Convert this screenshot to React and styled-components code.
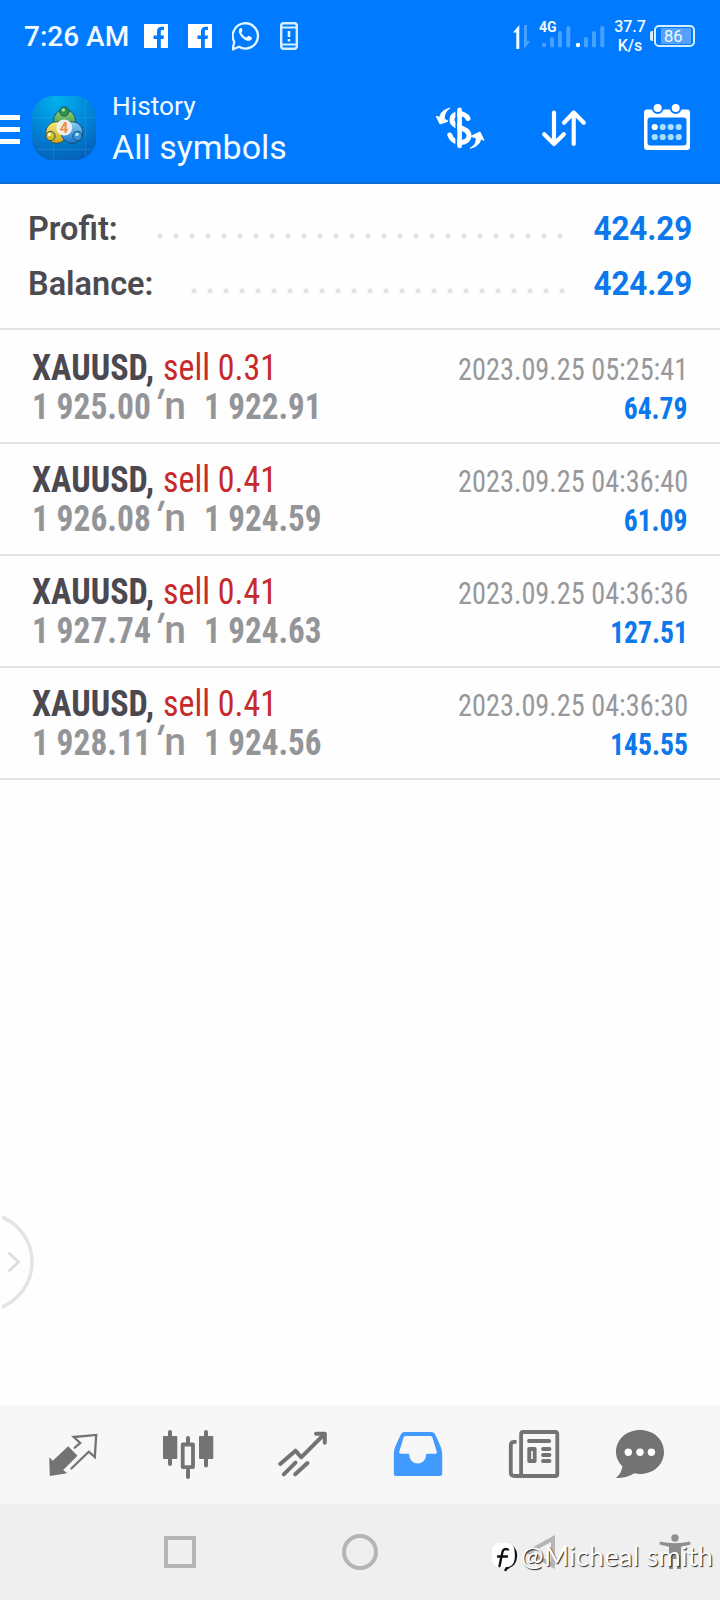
import React from "react";
import styled, { createGlobalStyle } from "styled-components";

const GlobalStyle = createGlobalStyle`
  * { box-sizing: border-box; }
  body { margin: 0; background: #fff; font-family: Roboto, "Liberation Sans", sans-serif; }
  svg { display: block; flex: none; }
`;

const Screen = styled.div`
  position: relative;
  width: 720px;
  height: 1600px;
  display: flex;
  flex-direction: column;
  overflow: hidden;
  background: #fefefe;
`;

/* ---------- top ---------- */
const Header = styled.header`
  height: 184px;
  background: #007aff;
  border-bottom: 2px solid #0a6cd6;
  color: #f2fbff;
`;
const StatusBar = styled.div`
  height: 74px;
  display: flex;
  align-items: center;
  padding: 0 25px 2px 24px;
`;
const Clock = styled.span`
  width: 120px;
  font-size: 28px;
  font-weight: 500;
  line-height: 32px;
  padding-top: 2px;
  white-space: nowrap;
`;
const Notices = styled.div`
  display: flex;
  align-items: center;
  gap: 20px;
  flex: 1;
`;
const Signals = styled.div`
  position: relative;
  height: 36px;
  width: 100px;
`;
const NetworkBadge = styled.span`
  position: absolute;
  left: 30px;
  top: 1px;
  font-size: 14px;
  font-weight: 700;
  line-height: 16px;
`;
const Speed = styled.div`
  width: 40px;
  margin-left: 1px;
  font-size: 16px;
  font-weight: 500;
  line-height: 19px;
  text-align: center;
`;
const Battery = styled.div`
  position: relative;
  width: 41px;
  height: 22px;
  margin-left: 4px;
  padding: 1px;
  border: 2px solid #d4efff;
  border-radius: 5px;
  display: flex;
  justify-content: flex-end;
  &::before {
    content: "";
    position: absolute;
    left: -6px;
    top: 4px;
    width: 3px;
    height: 10px;
    border-radius: 2px 0 0 2px;
    background: #d4efff;
  }
`;
const Charge = styled.span`
  width: 30px;
  height: 16px;
  margin-right: 1px;
  padding-left: 3px;
  background: #56a1fb;
  font-size: 16.5px;
  line-height: 17px;
`;
const AppBar = styled.div`
  height: 108px;
  display: flex;
  align-items: center;
  padding-right: 25px;
`;
const Burger = styled.div`
  width: 20px;
  height: 29px;
  margin: 3px 12px 0 0;
  border-top: 5px solid #fff;
  border-bottom: 5px solid #fff;
  display: flex;
  align-items: center;
  &::before {
    content: "";
    width: 20px;
    height: 5px;
    background: #fff;
  }
`;
const Titles = styled.div`
  flex: 1;
  margin-left: 16px;
  padding-top: 3px;
`;
const Title = styled.div`
  font-size: 26.3px;
  line-height: 34px;
`;
const Subtitle = styled.div`
  font-size: 34px;
  line-height: 48px;
`;
const Actions = styled.div`
  display: flex;
  gap: 47.5px;
`;

/* ---------- summary ---------- */
const Summary = styled.section`
  height: 146px;
  padding: 17px 28px 0;
  border-bottom: 2px solid #e3e3e4;
`;
const SummaryLine = styled.div`
  height: 55px;
  display: flex;
  align-items: center;
  font-size: 32.5px;
  line-height: 53px;
`;
const SummaryLabel = styled.span`
  width: ${(p) => p.$width}px;
  padding-top: 2px;
  color: #4c4b52;
  font-weight: 600;
`;
const Leader = styled.span`
  width: ${(p) => p.$dots * 16}px;
  height: 16px;
  margin-top: 14px;
  background: radial-gradient(circle, #e1e1e3 2px, rgba(225, 225, 227, 0) 3px) 0 0 / 16px 16px;
`;
const SummaryValue = styled.span`
  margin-left: auto;
  padding-top: 2px;
  color: #0b78ec;
  font-weight: 700;
  letter-spacing: -0.1px;
  transform: scaleX(0.965);
  transform-origin: right;
`;

/* ---------- deals ---------- */
const Deals = styled.section`
  flex: 1;
  padding-top: 2px;
`;
const Deal = styled.div`
  height: 112px;
  padding: 16px 32px 0;
  border-bottom: 2px solid #e3e3e4;
  font-stretch: 75%;
`;
const DealLine = styled.div`
  display: flex;
  height: 39px;
  line-height: 39px;
  white-space: pre;
`;
/* Text drawn narrower than the condensed face provides. */
const Narrow = styled.span`
  flex: none;
  transform: scaleX(${(p) => p.$scale});
  transform-origin: ${(p) => p.$from || "left"};
`;
const Symbol = styled(Narrow)`
  width: 131px;
  font-size: 37.5px;
  font-weight: 700;
  color: #4a4950;
`;
const Side = styled(Narrow)`
  font-size: 37.5px;
  color: #c62a2b;
`;
const Price = styled(Narrow)`
  width: ${(p) => p.$width}px;
  font-size: 37.5px;
  font-weight: 700;
  color: #949599;
`;
const Arrow = styled.span`
  width: 46px;
  font-size: 39px;
  font-stretch: 90%;
  font-weight: 500;
  color: #949599;
`;
const Tick = styled.span`
  display: inline-block;
  font-weight: 700;
  transform: translate(-4px, -1px) skewX(-18deg);
`;
const Time = styled(Narrow)`
  margin-left: auto;
  font-size: 30.5px;
  line-height: 43px;
  color: #98989c;
`;
const Amount = styled(Narrow)`
  margin-left: auto;
  font-size: 30.5px;
  line-height: 43px;
  font-weight: 700;
  color: #0b78ec;
`;

/* ---------- bottom ---------- */
const TabBar = styled.nav`
  height: 98px;
  display: grid;
  grid-template-columns: repeat(3, 115px) 116px 115px 97px;
  align-items: center;
  justify-items: center;
  padding-left: 15px;
  background: #f7f7f7;
  color: #737373;
`;
const NavBar = styled.nav`
  height: 96px;
  display: grid;
  grid-template-columns: repeat(3, 180px) 90px;
  align-items: center;
  justify-items: center;
  padding-left: 90px;
  background: #efefef;
  color: #b5b5b5;
`;
const SideHandle = styled.div`
  position: absolute;
  left: 2px;
  top: 1210px;
`;
const Watermark = styled.div`
  position: absolute;
  left: 490px;
  top: 1537px;
  display: flex;
  align-items: center;
  height: 36px;
  gap: 3px;
  color: #fff;
  font: 400 27px Lato, sans-serif;
  letter-spacing: 0.3px;
  text-shadow: 1px 1px 1px #222;
  white-space: nowrap;
`;

const Icon = ({ children, size = 56, ...rest }) => (
  <svg width={size} height={size} viewBox={`0 0 ${size} ${size}`} fill="none" stroke="currentColor" strokeLinecap="round" strokeLinejoin="round" {...rest}>
    {children}
  </svg>
);

const Facebook = () => (
  <svg width="24" height="24" viewBox="0 0 24 24">
    <rect width="24" height="24" fill="#fff" />
    <path d="M13 24v-9H9.500v-3.500H13V8c0-3.600 1.800-5.200 5-5.200h2v3.200h-1.500c-1.300 0-1.700.6-1.700 1.800v3.700H20l-.5 3.500h-2.700v9z" fill="#007aff" />
  </svg>
);

const WhatsApp = () => (
  <svg width="28" height="30" viewBox="1 0.5 28 30">
    <path d="M1.500 29 3.300 21.500A12.600 12.600 0 1 1 8 26.300Z" fill="none" stroke="#e2f6ff" strokeWidth="2.300" strokeLinejoin="round" />
    <path d="M9.500 7.500c-1.500.8-2 2.500-1.500 4.200 1.200 4.300 4.800 7.700 9 8.600 1.800.3 3.500-.7 3.900-2.300l-.2-1.200-3.300-1.600-1.900 1.900c-2.500-1-4.300-2.800-5.200-5.100l1.300-1.700-1.200-3z" fill="#f0fbff" />
  </svg>
);

const PhoneAlert = () => (
  <svg width="18" height="28" viewBox="0 0 18 28">
    <rect x="1.200" y="1.200" width="15.600" height="25.600" rx="2.500" fill="none" stroke="#d4f0ff" strokeWidth="2.400" />
    <path d="M1 5.500h16M1 22.500h16" stroke="#d4f0ff" strokeWidth="1.900" />
    <path d="M9 9v6M9 17v2.500" stroke="#e2f6ff" strokeWidth="2.600" />
  </svg>
);

const SignalBars = ({ x, on }) => (
  <g fill="#47a2ff">
    <circle cx={x} cy="27" r="2.200" fill={on ? "#fff" : "#47a2ff"} />
    <rect x={x + 6} y="19" width="4" height="10.500" rx="2" />
    <rect x={x + 14} y="13" width="4" height="16.500" rx="2" />
    <rect x={x + 22.300} y="8" width="4" height="21.500" rx="2" />
  </g>
);

const AppLogo = () => (
  <svg width="64" height="64" viewBox="0 0 64 64">
    <defs>
      <radialGradient id="sky" cx=".4" cy=".05" r="1">
        <stop offset="0" stopColor="#00b2ee" />
        <stop offset=".55" stopColor="#0284d6" />
        <stop offset="1" stopColor="#0460b8" />
      </radialGradient>
      <linearGradient id="leaf" x2="0" y2="1"><stop stopColor="#8fd07a" /><stop offset="1" stopColor="#2c8a3c" /></linearGradient>
      <linearGradient id="sun" x2="0" y2="1"><stop stopColor="#f3ec77" /><stop offset="1" stopColor="#c9a818" /></linearGradient>
      <linearGradient id="sea" x2="0" y2="1"><stop stopColor="#8ccff5" /><stop offset="1" stopColor="#1778c8" /></linearGradient>
    </defs>
    <rect width="64" height="64" rx="21" fill="url(#sky)" />
    <path d="M21.500 0v64M0 21.500h64M53.500 4v56M4 53.500h56" stroke="#45b0e8" strokeWidth=".7" opacity=".35" />
    <g stroke="#17456b" strokeWidth=".9">
      <circle cx="32.500" cy="24.500" r="11" fill="url(#leaf)" />
      <circle cx="24.500" cy="36.500" r="10.800" fill="url(#sun)" />
      <circle cx="40" cy="36.500" r="10.800" fill="url(#sea)" />
      <circle cx="32.300" cy="15.500" r="4.600" fill="#2f9440" />
      <circle cx="18.500" cy="40" r="4.600" fill="#d6ba2c" />
      <circle cx="45.500" cy="40" r="4.600" fill="#3995dc" />
    </g>
    <circle cx="31.300" cy="14" r="1.800" fill="#9be08f" />
    <circle cx="17.500" cy="38.500" r="1.700" fill="#fff9a8" />
    <circle cx="45" cy="38.500" r="1.700" fill="#b9e6ff" />
    <circle cx="32.200" cy="31.500" r="8" fill="#eeeeed" />
    <text x="32" y="37" fontSize="15" fontWeight="600" textAnchor="middle" fill="#f08b36">4</text>
  </svg>
);

const DEALS = [
  ["0.31", "1 925.00", "1 922.91", "2023.09.25 05:25:41", "64.79"],
  ["0.41", "1 926.08", "1 924.59", "2023.09.25 04:36:40", "61.09"],
  ["0.41", "1 927.74", "1 924.63", "2023.09.25 04:36:36", "127.51"],
  ["0.41", "1 928.11", "1 924.56", "2023.09.25 04:36:30", "145.55"],
];

export default function App() {
  return (
    <Screen>
      <GlobalStyle />
      <Header>
        <StatusBar>
          <Clock>7:26 AM</Clock>
          <Notices>
            <Facebook />
            <Facebook />
            <WhatsApp />
            <PhoneAlert />
          </Notices>
          <Signals>
            <svg width="100" height="36" viewBox="0 0 100 36">
              <path d="M10.300 31V7L4 14.500h3.300V31z" fill="#f2fbff" />
              <path d="M15 7v24l6.300-8h-3.300V7z" fill="#47a2ff" />
              <SignalBars x={35} />
              <SignalBars x={69} on />
            </svg>
            <NetworkBadge>4G</NetworkBadge>
          </Signals>
          <Speed>37.7<br />K/s</Speed>
          <Battery><Charge>86</Charge></Battery>
        </StatusBar>
        <AppBar>
          <Burger />
          <AppLogo />
          <Titles>
            <Title>History</Title>
            <Subtitle>All symbols</Subtitle>
          </Titles>
          <Actions>
            <Icon stroke="#fff">
              <path d="M36 18.500C33.500 12.500 20 11.500 20 20c0 8.500 17 6.500 17 15.500C37 44.500 21 45 17.800 35" strokeWidth="5" />
              <path d="M24.300 7v42" stroke="#007aff" strokeWidth="1.800" strokeLinecap="butt" />
              <path d="M27.600 9.800v36.200" strokeWidth="4.600" />
              <path d="M17.500 8.200C11 10 7.800 13.500 8 17.500L4.200 16.300 8 24l8-2.800-3.700-2.200C12 14.500 14 11 17.500 8.200Z" fill="#fff" strokeWidth="1" />
              <path d="M38.500 48c4.500-2.500 6-5.500 5.500-10l-5-1.800 9-4.200 4 8.300-3.300-1.500C48.500 43 44 47.500 38.500 48Z" fill="#fff" strokeWidth="1" />
            </Icon>
            <Icon stroke="#fff" strokeWidth="4.200">
              <path d="M18 12.500V44M8.200 34.200 18 44 27.800 34.200M37.700 44V12.500M28 22.800 37.700 12.500 47.800 22.800" />
            </Icon>
            <Icon stroke="none">
              <rect x="5" y="9.500" width="46" height="40.500" rx="3" fill="#fff" />
              <g fill="#fff" stroke="#007aff" strokeWidth="2">
                <circle cx="18.700" cy="8" r="5" />
                <circle cx="36.700" cy="8" r="5" />
              </g>
              <rect x="8.500" y="17.500" width="39" height="28" rx="3" fill="#007aff" />
              {[27, 37].map((y) => [15.7, 23.7, 31.7, 39.7].map((x) => (
                <circle key={x + y} cx={x} cy={y} r="3.100" fill={x < 16 && y < 30 ? "#fff" : "#a9defe"} />
              )))}
            </Icon>
          </Actions>
        </AppBar>
      </Header>

      <Summary>
        <SummaryLine>
          <SummaryLabel $width={124}>Profit:</SummaryLabel>
          <Leader $dots={26} />
          <SummaryValue>424.29</SummaryValue>
        </SummaryLine>
        <SummaryLine>
          <SummaryLabel $width={158}>Balance:</SummaryLabel>
          <Leader $dots={24} />
          <SummaryValue>424.29</SummaryValue>
        </SummaryLine>
      </Summary>

      <Deals>
        {DEALS.map(([lots, open, close, time, amount]) => (
          <Deal key={time}>
            <DealLine>
              <Symbol $scale={0.91}>XAUUSD,</Symbol>
              <Side $scale={0.905}>sell {lots}</Side>
              <Time $scale={0.927} $from="right">{time}</Time>
            </DealLine>
            <DealLine>
              <Price $scale={0.892} $width={126}>{open}</Price>
              <Arrow><Tick>′</Tick>n</Arrow>
              <Price $scale={0.882} $width={130}>{close}</Price>
              <Amount $scale={0.905} $from="right">{amount}</Amount>
            </DealLine>
          </Deal>
        ))}
      </Deals>

      <SideHandle>
        <svg width="36" height="104" viewBox="2 0 36 104" fill="none">
          <circle cx="-16.500" cy="52" r="48.500" stroke="#e4e4e4" strokeWidth="3.500" />
          <path d="M9.500 43.500 18.500 52 9.500 60.500" stroke="#dfdcdf" strokeWidth="2.800" strokeLinecap="round" />
        </svg>
      </SideHandle>

      <TabBar>
        <Icon strokeWidth="2.300">
          <path d="M4.200 30.300 7.800 33.700 23.200 19.300 32.500 28.700 18.200 43 22.200 46.300 4.800 49Z" fill="currentColor" stroke="none" />
          <path d="M29.800 20.700 35.200 16 28.700 10 51.200 7.900 49.800 30 43.800 24.700 26.400 41.500" strokeLinejoin="miter" />
        </Icon>
        <Icon strokeWidth="4">
          <path d="M10 5v32M28 11v5M28 43v7M46 5v33.500" />
          <rect x="3" y="9" width="14.300" height="23" rx="1" fill="currentColor" stroke="none" />
          <rect x="39" y="9" width="14.300" height="23" rx="1" fill="currentColor" stroke="none" />
          <rect x="22.700" y="17.500" width="10.300" height="22.600" strokeWidth="3.800" />
        </Icon>
        <Icon strokeWidth="4">
          <path d="M5.200 37 20.500 23.700 26.200 30.300 49.500 7M8.800 47.300 20.500 35.700M20.200 47.300 32.500 36" />
          <path d="M41 6.700h8.800v9" />
        </Icon>
        <Icon stroke="none">
          <path fillRule="evenodd" fill="#419bff" d="M14.500 5h27c2 0 3 1 3.800 2.800 3.500 7.500 6.900 14 6.900 19.200v19.500c0 1.700-.8 2.500-2.500 2.500H6.300c-1.700 0-2.500-.8-2.500-2.500V27c0-5.200 3.400-11.700 6.900-19.200C11.500 6 12.500 5 14.500 5ZM16 9c-1.300 0-2 .5-2.500 1.700L9.300 24.500c-.4 1.400 0 2.200 1.400 2.200h8.500v1a8.500 8.800 0 0 0 17 0v-1h9.100c1.400 0 1.800-.8 1.400-2.200L42.500 10.700C42 9.500 41.300 9 40 9Z" />
        </Icon>
        <Icon strokeWidth="3.800">
          <rect x="15.100" y="5" width="36.200" height="44" rx="2" />
          <path d="M10.500 14.800H8.500Q4.800 14.800 4.800 18v27.500Q4.800 49 8.500 49H17" strokeLinecap="butt" />
          <path d="M23 14h20.200M37 22h6.500M37 28h6.500M37 34h6.500" />
          <rect x="23.200" y="22" width="5.500" height="12" />
        </Icon>
        <Icon stroke="none">
          <path d="M28 3c13.300 0 24 9.300 24 22S41.300 47 28 47c-2 0-4-.3-5.700-.8C16.500 50 10 51.200 4 51c4-3.500 6-7 6.300-11.700C6.500 35.500 4 30.500 4 25 4 12.300 14.700 3 28 3Z" fill="currentColor" />
          <g fill="#fff"><circle cx="16.300" cy="25.300" r="3.700" /><circle cx="28" cy="25.300" r="3.700" /><circle cx="39.400" cy="25.300" r="3.700" /></g>
        </Icon>
      </TabBar>

      <NavBar>
        <Icon size={36} strokeWidth="4" strokeLinejoin="miter"><rect x="4" y="4" width="28" height="28" /></Icon>
        <Icon size={36} strokeWidth="4"><circle cx="18" cy="18" r="16" /></Icon>
        <Icon size={36} strokeWidth="4" strokeLinejoin="miter"><path d="M31 4.500v27L6.500 18Z" /></Icon>
        <Icon size={36} stroke="none" fill="#8e8e8e">
          <circle cx="18" cy="4" r="3.700" />
          <path d="M3 7.500c10 2.200 20 2.200 30 0l.5 3L24 12.700V35h-4V25h-4v10h-4V12.700L2.500 10.500Z" />
        </Icon>
      </NavBar>

      <Watermark>
        <svg width="28" height="34" viewBox="0 0 28 34" fill="none" strokeLinecap="round">
          <path d="M21.500 8.500c6.500 4 6 17-2.500 20.500-2.500.8-3 1.500-3.500 3" stroke="#111" strokeWidth="2.400" />
          <rect x="2" y="5" width="22.500" height="24" rx="7.500" fill="#fff" />
          <path d="M18 11.500C13.500 9.500 12.300 13 11.800 17L9.500 28M8 18.500h9" stroke="#111" strokeWidth="2.400" />
        </svg>
        <span>@Micheal smith</span>
      </Watermark>
    </Screen>
  );
}
